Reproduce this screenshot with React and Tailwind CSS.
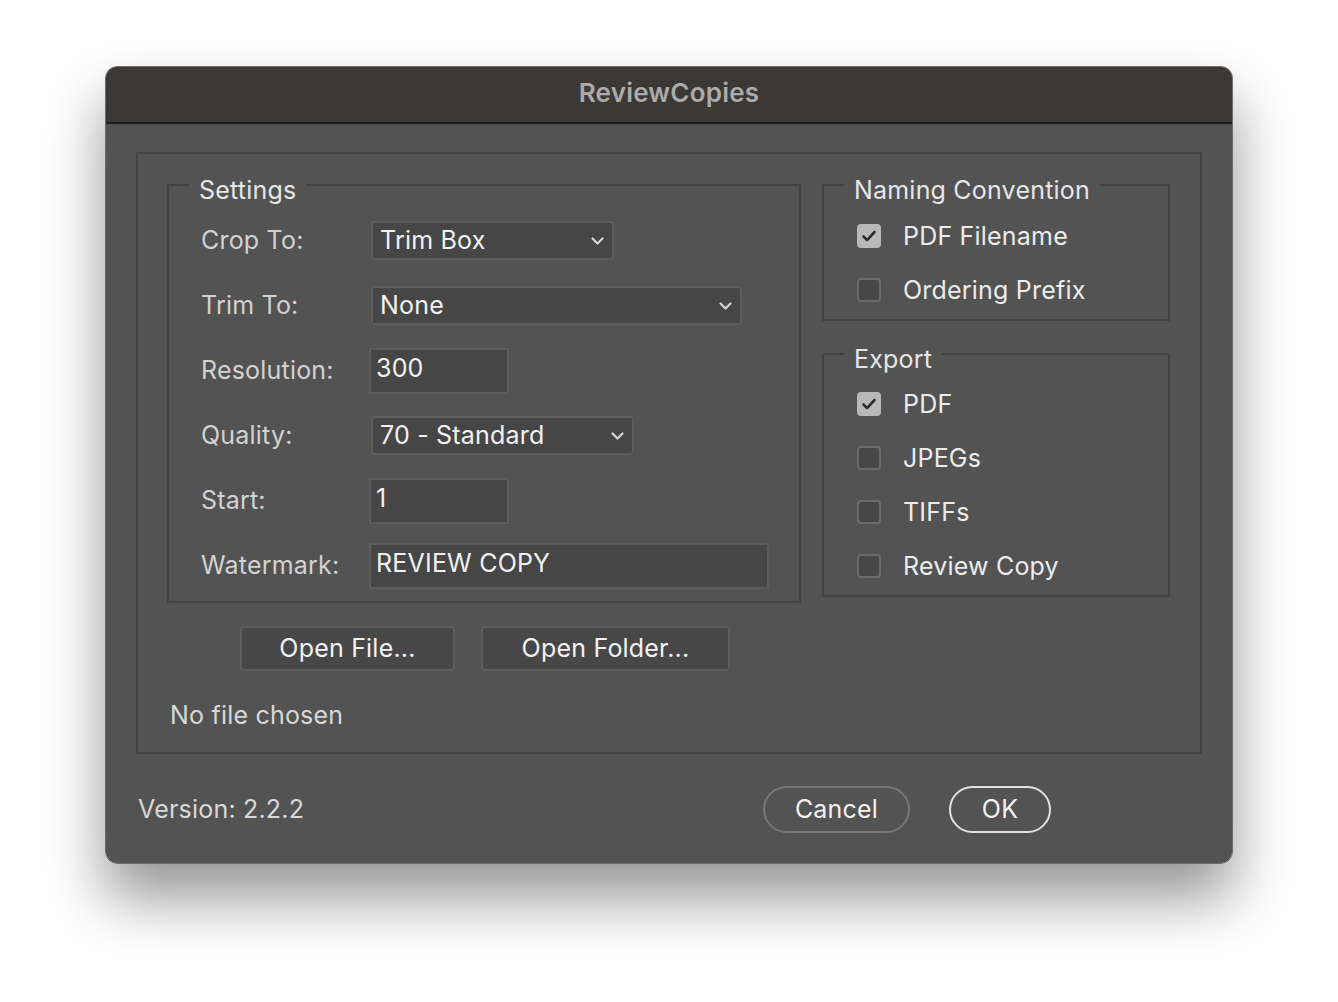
import { useState } from "react";

const font = { fontFamily: "Inter, 'Noto Sans', sans-serif", letterSpacing: "0.2px" };

const Chevron = () => (
  <svg width="13" height="8" viewBox="0 0 13 8" fill="none" className="shrink-0">
    <path d="M1.5 1.5l5 5 5-5" stroke="#d6d6d6" strokeWidth="2.2" strokeLinecap="round" strokeLinejoin="round" />
  </svg>
);

const Select = ({ value, width }) => (
  <div
    className={`flex h-[39px] items-center justify-between rounded-[4px] border-2 border-[#5d5d5d] bg-[#464646] pl-[7px] pr-[8px] text-[25px] text-[#f2f2f2] ${width}`}
  >
    <span className="leading-none">{value}</span>
    <Chevron />
  </div>
);

const Field = ({ value, width }) => (
  <div
    className={`flex h-[46px] items-start border-2 border-[#5c5c5c] bg-[#464646] pl-[5px] pt-[4px] text-[25px] leading-[28px] text-[#f2f2f2] ${width}`}
  >
    {value}
  </div>
);

const Check = ({ label, checked, onToggle }) => (
  <div className="flex h-[34px] items-center gap-[22px]" onClick={onToggle}>
    {checked ? (
      <div className="flex h-[24px] w-[24px] items-center justify-center rounded-[4px] bg-[#b9b9b9]">
        <svg width="16" height="14" viewBox="0 0 16 14" fill="none">
          <path d="M2.5 7.5l3.6 3.6L13.5 3" stroke="#2f2f2f" strokeWidth="2.6" strokeLinecap="round" strokeLinejoin="round" />
        </svg>
      </div>
    ) : (
      <div className="h-[24px] w-[24px] rounded-[4px] border-2 border-[#6a6a6a] bg-[#474747]" />
    )}
    <span className="text-[25px] leading-[28px] text-[#ececec]">{label}</span>
  </div>
);

const Group = ({ title, className, children }) => (
  <fieldset className={`border-2 border-[#424242] px-0 ${className}`}>
    <legend className="ml-[20px] px-[10px] pt-[10px] text-[25px] leading-[28px] text-[#e6e6e6]">{title}</legend>
    {children}
  </fieldset>
);

const rows = [
  { label: "Crop To:", el: <Select value="Trim Box" width="w-[243px] ml-[2px]" /> },
  { label: "Trim To:", el: <Select value="None" width="w-[371px] ml-[2px]" /> },
  { label: "Resolution:", el: <Field value="300" width="w-[140px]" /> },
  { label: "Quality:", el: <Select value="70 - Standard" width="w-[263px] ml-[2px]" /> },
  { label: "Start:", el: <Field value="1" width="w-[140px]" /> },
  { label: "Watermark:", el: <Field value="REVIEW COPY" width="w-[400px]" /> },
];

export default function App() {
  const [naming, setNaming] = useState({ "PDF Filename": true, "Ordering Prefix": false });
  const [exp, setExp] = useState({ PDF: true, JPEGs: false, TIFFs: false, "Review Copy": false });

  return (
    <div className="min-h-[1002px] w-full bg-white pl-[105px] pt-[66px]" style={font}>
      <div className="flex h-[798px] w-[1128px] flex-col overflow-hidden rounded-[12px] border border-[#6d6d6d] shadow-[0_34px_60px_rgba(0,0,0,0.42)]">
        {/* Title bar */}
        <div className="flex h-[57px] shrink-0 items-center justify-center border-b-2 border-[#1f1e1d] bg-[#3b3836] pb-[4px]">
          <span className="text-[26px] font-semibold text-[#ababab]">ReviewCopies</span>
        </div>

        {/* Body */}
        <div className="flex flex-1 flex-col bg-[#535353] px-[30px] pt-[28px]">
          <div className="flex flex-col border-2 border-[#434343] pb-[23px] pl-[29px] pt-[12px]">
            <div className="flex gap-[21px]">
              {/* Settings */}
              <Group title="Settings" className="w-[634px] pb-[13px]">
                <div className="flex flex-col gap-[20px] pl-[32px] pt-[14px]">
                  {rows.map((r) => (
                    <div key={r.label} className="flex h-[45px] items-center">
                      <span className="w-[168px] shrink-0 text-[25px] text-[#d2d2d2]">{r.label}</span>
                      {r.el}
                    </div>
                  ))}
                </div>
              </Group>

              {/* Right column */}
              <div className="flex flex-col gap-[14px]">
                <Group title="Naming Convention" className="w-[348px] pb-[12px]">
                  <div className="flex flex-col gap-[20px] pl-[33px] pt-[15px]">
                    {Object.keys(naming).map((k) => (
                      <Check key={k} label={k} checked={naming[k]} onToggle={() => setNaming((p) => ({ ...p, [k]: !p[k] }))} />
                    ))}
                  </div>
                </Group>
                <Group title="Export" className="w-[348px] pb-[12px]">
                  <div className="flex flex-col gap-[20px] pl-[33px] pt-[14px]">
                    {Object.keys(exp).map((k) => (
                      <Check key={k} label={k} checked={exp[k]} onToggle={() => setExp((p) => ({ ...p, [k]: !p[k] }))} />
                    ))}
                  </div>
                </Group>
              </div>
            </div>

            {/* File buttons */}
            <div className="mt-[23px] flex gap-[26px] pl-[73px]">
              <button className="h-[45px] w-[215px] rounded-[4px] border-2 border-[#5d5d5d] bg-[#474747] text-[25px] text-[#f2f2f2]">
                Open File...
              </button>
              <button className="h-[45px] w-[249px] rounded-[4px] border-2 border-[#5d5d5d] bg-[#474747] text-[25px] text-[#f2f2f2]">
                Open Folder...
              </button>
            </div>

            <p className="mt-[30px] pl-[3px] text-[25px] leading-[28px] text-[#d8d8d8]">No file chosen</p>
          </div>

          {/* Footer */}
          <div className="mt-[32px] flex items-center">
            <span className="ml-[2px] text-[25px] text-[#d8d8d8]">Version: 2.2.2</span>
            <div className="ml-auto mr-[151px] flex gap-[39px]">
              <button className="h-[47px] w-[147px] rounded-full border-2 border-[#777777] text-[25px] text-[#f2f2f2]">
                Cancel
              </button>
              <button className="h-[47px] w-[102px] rounded-full border-2 border-[#e2e2e2] text-[25px] text-[#f2f2f2]">
                OK
              </button>
            </div>
          </div>
        </div>
      </div>
    </div>
  );
}
